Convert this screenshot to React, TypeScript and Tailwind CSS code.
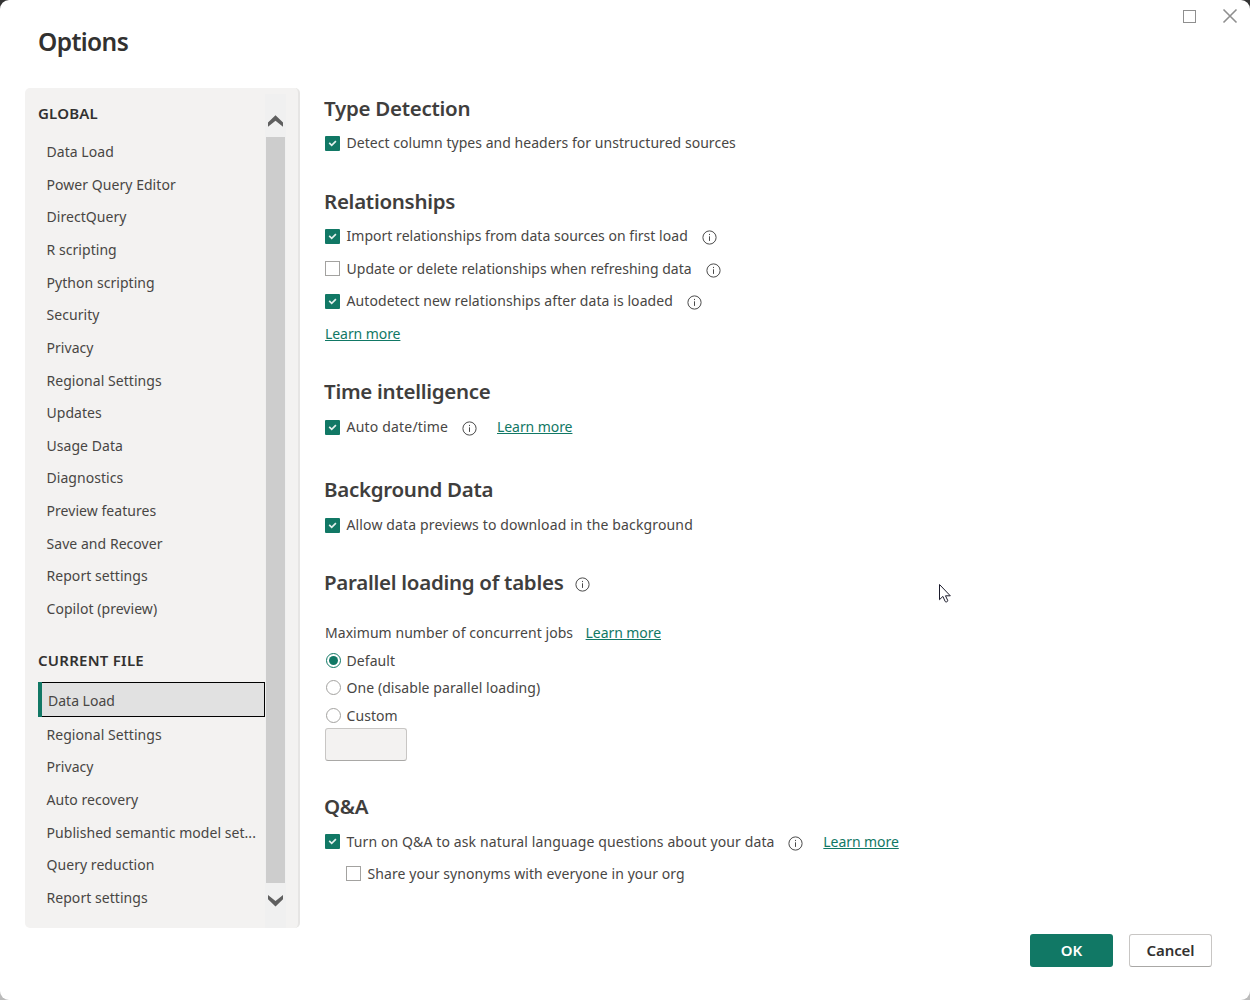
import React from "react";

const globalItems = [
  "Data Load",
  "Power Query Editor",
  "DirectQuery",
  "R scripting",
  "Python scripting",
  "Security",
  "Privacy",
  "Regional Settings",
  "Updates",
  "Usage Data",
  "Diagnostics",
  "Preview features",
  "Save and Recover",
  "Report settings",
  "Copilot (preview)",
];

const fileItems = [
  "Regional Settings",
  "Privacy",
  "Auto recovery",
  "Published semantic model set...",
  "Query reduction",
  "Report settings",
];

const InfoIcon: React.FC<{ className?: string }> = ({ className = "" }) => (
  <svg className={`shrink-0 ${className}`} width="15" height="15" viewBox="0 0 15 15" fill="none">
    <circle cx="7.5" cy="7.5" r="6.6" stroke="#4a4a4a" strokeWidth="1" />
    <path d="M7.5 6.3v4.6M7.5 3.9v1.2" stroke="#4a4a4a" strokeWidth="1" />
  </svg>
);

const LearnMore: React.FC<{ className?: string }> = ({ className = "" }) => (
  <a
    href="#"
    className={`tracking-[-0.07px] text-[#117865] underline underline-offset-1 decoration-1 ${className}`}
  >
    Learn more
  </a>
);

const Checkbox: React.FC<{ checked?: boolean }> = ({ checked }) =>
  checked ? (
    <span className="mt-px flex h-[15px] w-[15px] shrink-0 items-center justify-center rounded-[1px] bg-[#117865]">
      <svg width="15" height="15" viewBox="0 0 15 15" fill="none">
        <path d="M4.2 6.9l2.5 2.4 4.2-4.1" stroke="#e4f1ee" strokeWidth="1.7" />
      </svg>
    </span>
  ) : (
    <span className="h-[15px] w-[15px] shrink-0 border border-[#a3a2a0] bg-white" />
  );

const CheckRow: React.FC<{
  label: string;
  checked?: boolean;
  info?: boolean;
  className?: string;
  labelClass?: string;
  children?: React.ReactNode;
}> = ({ label, checked, info, className = "", labelClass = "", children }) => (
  <div className={`flex h-[32.6px] items-center pl-px ${className}`}>
    <Checkbox checked={checked} />
    <span className={`ml-[6.5px] ${labelClass}`}>{label}</span>
    {info && <InfoIcon className="mt-1 ml-[13.8px]" />}
    {children}
  </div>
);

const Radio: React.FC<{ label: string; checked?: boolean }> = ({ label, checked }) => (
  <div className="flex h-[27.6px] items-center gap-[5.5px] pl-0.5">
    <span
      className={`flex h-[15px] w-[15px] items-center justify-center rounded-full border ${
        checked ? "border-[#117865]" : "border-[#a3a2a0]"
      }`}
    >
      {checked && <span className="h-[9px] w-[9px] rounded-full bg-[#117865]" />}
    </span>
    <span className="tracking-[0.07px]">{label}</span>
  </div>
);

const Heading: React.FC<{ children: React.ReactNode }> = ({ children }) => (
  <h2 className="flex h-[35px] items-center pb-px text-[20.5px] font-[570] tracking-[-0.28px] text-[#3f3e3d]">
    {children}
  </h2>
);

const NavItem: React.FC<{ label: string }> = ({ label }) => (
  <li className="flex h-[32.64px] items-center pl-[8.5px] tracking-[0.05px] whitespace-nowrap">
    {label}
  </li>
);

const Scrollbar: React.FC = () => (
  <div className="mt-1.5 flex w-[21px] flex-col items-center bg-[#f0f0f0]">
    <div className="flex h-[43px] items-end pb-[10px]">
      <svg width="17" height="14" viewBox="0 0 17 14" fill="none">
        <path d="M1 9.6v4.1l7.5-5.9 7.5 5.9V9.6L8.5 2.2z" fill="#5f5f5f" />
      </svg>
    </div>
    <div className="h-[746px] w-[19px] bg-[#cdcdcd]" />
    <svg className="mt-[11px]" width="17" height="14" viewBox="0 0 17 14" fill="none">
      <path d="M1 5.2V1.1L8.5 7 16 1.1v4.1l-7.5 7.4z" fill="#5f5f5f" />
    </svg>
  </div>
);

const Sidebar: React.FC = () => (
  <nav className="flex h-[840px] w-[275px] rounded-[5px] border-r-2 border-[#e6e5e4] bg-[#f3f2f1]">
    <div className="w-[240px] shrink-0 pl-[13px]">
      <h3 className="mt-[9px] flex h-[33px] items-center text-[15px] font-semibold tracking-[0.2px] text-[#323130]">
        GLOBAL
      </h3>
      <ul className="mt-[5.35px]">
        {globalItems.map((item) => (
          <NavItem key={item} label={item} />
        ))}
      </ul>
      <h3 className="mt-[19.15px] flex h-[33px] items-center text-[15px] font-semibold tracking-[0.25px] text-[#323130]">
        CURRENT FILE
      </h3>
      <div className="mt-[5px] flex h-[35px] items-center border border-l-0 border-black bg-[#e1e1e1]">
        <span className="-my-px h-[35px] w-1 bg-[#117865]" />
        <span className="pt-0.5 pl-1.5">Data Load</span>
      </div>
      <ul className="mt-px">
        {fileItems.map((item) => (
          <NavItem key={item} label={item} />
        ))}
      </ul>
    </div>
    <Scrollbar />
  </nav>
);

const App: React.FC = () => {
  return (
    <div className="h-[1000px] w-[1250px] bg-[linear-gradient(#333_50%,#bbb_50%)]">
      <div
        className="relative flex h-full w-full flex-col overflow-hidden rounded-[9px] bg-white text-[14px] text-[#484644]"
        style={{ fontFamily: '"Noto Sans", "Open Sans", sans-serif' }}
      >
        {/* Title bar */}
        <header className="flex h-[88px] justify-between pr-3 pl-[38px]">
          <h1 className="mt-[25px] text-[24.5px] leading-[34px] font-[560] tracking-[-0.6px] text-[#323130]">
            Options
          </h1>
          <div className="mt-2 flex h-4 items-center gap-[25px] text-[#8f8f8f]">
            <svg width="16" height="16" viewBox="0 0 16 16" fill="none">
              <rect x="2.5" y="2.5" width="12" height="12" stroke="currentColor" />
            </svg>
            <svg width="16" height="16" viewBox="0 0 16 16" fill="none">
              <path d="M1.5 1.5l13 13M14.5 1.5l-13 13" stroke="currentColor" strokeWidth="1.6" />
            </svg>
          </div>
        </header>

        <div className="flex pl-[25px]">
          <Sidebar />

          <main className="ml-6 h-[840px] pt-[3.7px]">
            <section>
              <Heading>Type Detection</Heading>
              <CheckRow
                checked
                label="Detect column types and headers for unstructured sources"
                labelClass="tracking-[0.04px]"
              />
            </section>

            <section className="mt-[25px]">
              <Heading>Relationships</Heading>
              <CheckRow
                checked
                info
                label="Import relationships from data sources on first load"
                labelClass="tracking-[0.03px]"
              />
              <CheckRow
                info
                label="Update or delete relationships when refreshing data"
                labelClass="tracking-[0.03px]"
              />
              <CheckRow
                checked
                info
                label="Autodetect new relationships after data is loaded"
                labelClass="tracking-[0.08px]"
              />
              <div className="flex h-[32.6px] items-center pl-px">
                <LearnMore />
              </div>
            </section>

            <section className="mt-[25px]">
              <Heading>Time intelligence</Heading>
              <CheckRow
                checked
                info
                label="Auto date/time"
                className="mt-px"
                labelClass="tracking-[0.19px]"
              >
                <LearnMore className="ml-5" />
              </CheckRow>
            </section>

            <section className="mt-[29px]">
              <Heading>Background Data</Heading>
              <CheckRow
                checked
                label="Allow data previews to download in the background"
                className="mt-px"
                labelClass="tracking-[0.14px]"
              />
            </section>

            <section className="mt-[25px]">
              <Heading>
                Parallel loading of tables
                <InfoIcon className="mt-1 ml-3" />
              </Heading>
              <div className="mt-[15px] flex h-[32.6px] items-center pl-px">
                <span className="tracking-[0.05px]">Maximum number of concurrent jobs</span>
                <LearnMore className="ml-[12.5px]" />
              </div>
              <div className="-mt-0.5">
                <Radio checked label="Default" />
                <Radio label="One (disable parallel loading)" />
                <Radio label="Custom" />
              </div>
              <div className="-mt-px ml-px h-[33px] w-[82px] rounded-[3px] border border-[#c8c6c4] border-b-[#a9a8a6] bg-[#f3f2f1]" />
            </section>

            <section className="mt-[28px]">
              <Heading>Q&amp;A</Heading>
              <CheckRow
                checked
                info
                label="Turn on Q&A to ask natural language questions about your data"
                className="mt-[0.6px]"
                labelClass="tracking-[0.12px]"
              >
                <LearnMore className="ml-5" />
              </CheckRow>
              <CheckRow
                className="-mt-[0.6px] ml-[21px]"
                label="Share your synonyms with everyone in your org"
                labelClass="tracking-[0.08px]"
              />
            </section>
          </main>
        </div>

        <footer className="mt-1.5 flex justify-end gap-4 pr-[38px] text-[15px] font-semibold tracking-[-0.1px]">
          <button className="h-[33px] w-[83px] rounded-[3px] bg-[#117865] text-white">OK</button>
          <button className="h-[33px] w-[83px] rounded-[3px] border border-[#c8c6c4] border-b-[#a9a8a6] bg-white text-[#323130]">
            Cancel
          </button>
        </footer>

        {/* Mouse pointer */}
        <svg className="absolute top-[583px] left-[938px]" width="14" height="21" viewBox="0 0 14 21">
          <path
            d="M1.5 1.5v15.2l3.4-3.3 2.3 5.1c.5 1.1 3 .1 2.5-1.1l-2.2-4.6h4.8z"
            fill="white"
            stroke="#1b1b2b"
            strokeWidth="1"
          />
        </svg>
      </div>
    </div>
  );
};

export default App;
